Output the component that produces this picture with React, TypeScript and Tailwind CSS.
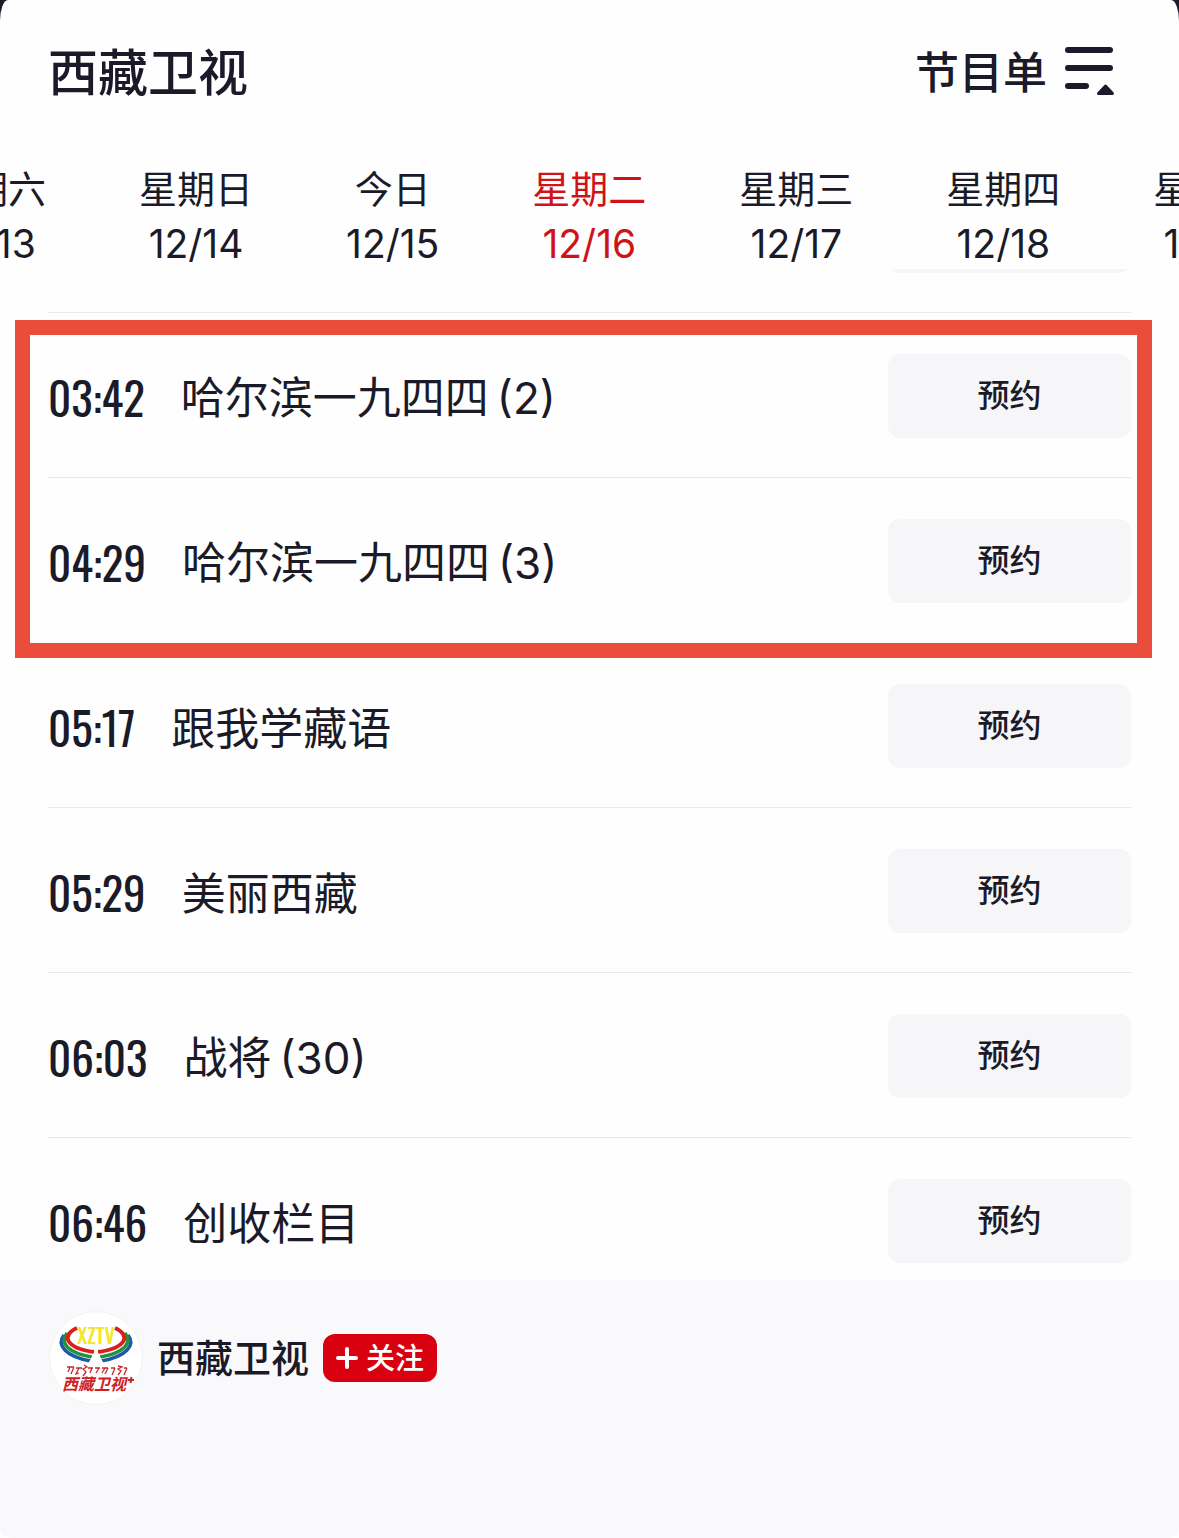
import React from 'react';

const days = [
  { label: '星期六', date: '12/13' },
  { label: '星期日', date: '12/14' },
  { label: '今日', date: '12/15' },
  { label: '星期二', date: '12/16', active: true },
  { label: '星期三', date: '12/17' },
  { label: '星期四', date: '12/18' },
  { label: '星期五', date: '12/19' },
];

type Programme = { time: string; name: string; part?: string };

const highlighted: Programme[] = [
  { time: '03:42', name: '哈尔滨一九四四', part: '(2)' },
  { time: '04:29', name: '哈尔滨一九四四', part: '(3)' },
];

const others: Programme[] = [
  { time: '05:17', name: '跟我学藏语' },
  { time: '05:29', name: '美丽西藏' },
  { time: '06:03', name: '战将', part: '(30)' },
  { time: '06:46', name: '创收栏目' },
];

function Row({ time, name, part }: Programme) {
  return (
    <li className="mx-12 flex h-[165px] items-center border-b border-[#e9e9eb] pt-0.5">
      <time className="font-['Oswald','Noto_Sans_CJK_SC',sans-serif] text-[45px] leading-none">
        {time}
      </time>
      <span className="ml-9 flex-1 font-['Noto_Sans_CJK_SC',sans-serif] text-[44px] leading-none">
        {name}
        {part && <span className="ml-2 font-['Inter',sans-serif]">{part}</span>}
      </span>
      <button
        type="button"
        className="h-[84px] w-[243px] rounded-xl bg-[#f6f6f9] text-[32px] font-medium leading-none"
      >
        预约
      </button>
    </li>
  );
}

function MenuIcon() {
  return (
    <svg width="50" height="54" viewBox="0 0 50 54" aria-hidden="true">
      <path
        d="M3 4H45M3 22H45M3 40H21"
        stroke="#1b1a28"
        strokeWidth="6"
        strokeLinecap="round"
      />
      <path
        d="M33.500 47.500L40.500 40L47.500 47.500Z"
        fill="#1b1a28"
        stroke="#1b1a28"
        strokeWidth="3"
        strokeLinejoin="round"
      />
    </svg>
  );
}

function ChannelLogo() {
  return (
    <svg width="96" height="94" viewBox="-1 0 96 94" role="img" aria-label="XZTV">
      <circle cx="47" cy="47" r="46.500" fill="#fff" stroke="#f2f2f5" />
      <g fill="none">
        <path d="M15 24C7 34 17 46 42 50" stroke="#1b5aa6" strokeWidth="3.500" />
        <path d="M18 22C10 32 19 42 43 46" stroke="#23933f" strokeWidth="3.500" />
        <path d="M28 17C12 24 16 37 45 41" stroke="#d9201f" strokeWidth="4" />
        <path d="M79 24C87 34 77 46 52 50" stroke="#1b5aa6" strokeWidth="3.500" />
        <path d="M76 22C84 32 75 42 51 46" stroke="#23933f" strokeWidth="3.500" />
        <path d="M66 17C82 24 78 37 49 41" stroke="#d9201f" strokeWidth="4" />
      </g>
      <path d="M47 38L39 53H55Z" fill="#fff" />
      <text
        x="47"
        y="33"
        textAnchor="middle"
        fontFamily="Oswald, sans-serif"
        fontWeight="500"
        fontSize="20"
        fill="#f5e62c"
      >
        XZTV
      </text>
      <path
        d="M18 56h7M21 56l-2 5M25 56l-3 7M27 57h6M30 57l-3 6 3-1M35 54l3 2-4 2 3 3-3 4M39 57h5M43 57l-2 5M46 57h5M50 57l-3 5M53 57h6M56 57l-3 5M59 57l-3 6M62 57h4M66 57l-3 7M69 55l4 1-4 2 3 2-3 4M75 57h3M78 57l-3 7"
        fill="none"
        stroke="#c62a28"
        strokeWidth="1.300"
      />
      <text
        x="45"
        y="79"
        textAnchor="middle"
        fontFamily="Noto Sans CJK SC, sans-serif"
        fontStyle="italic"
        fontWeight="700"
        fontSize="16"
        fill="#d0201f"
      >
        西藏卫视
      </text>
      <path d="M79 69h6M82.500 66l-1 6" stroke="#d0201f" strokeWidth="2" />
    </svg>
  );
}

export default function App() {
  return (
    <div className="h-screen bg-[#1b1a28] font-['Inter','Noto_Sans_CJK_SC',sans-serif] text-[#1b1a28]">
      <main className="flex h-full flex-col overflow-hidden rounded-tl-[8px_21px] rounded-tr-[8px_21px] bg-[#fefefe]">
        <header className="flex h-[146px] shrink-0 items-center justify-between pr-16 pl-12">
          <h1 className="text-[50px] font-medium leading-none">西藏卫视</h1>
          <button
            type="button"
            className="flex items-center gap-[18px] text-[44px] font-medium leading-none"
          >
            节目单
            <MenuIcon />
          </button>
        </header>

        <nav className="-ml-[68px] flex h-[123px] shrink-0 gap-[93px] pt-5" aria-label="日期">
          {days.map((d) => (
            <button
              key={d.date}
              type="button"
              aria-current={d.active ? 'date' : undefined}
              className={
                d.active
                  ? 'flex shrink-0 flex-col items-center text-[#cf1419]'
                  : 'flex shrink-0 flex-col items-center'
              }
            >
              <span className="text-[38px] leading-[46px]">{d.label}</span>
              <span className="text-[39px] leading-[64px]">{d.date}</span>
            </button>
          ))}
        </nav>

        <section className="flex min-h-0 flex-1 flex-col overflow-hidden">
          <div className="mx-12 flex h-11 shrink-0 items-end justify-end overflow-hidden border-b border-[#e9e9eb] pb-[39px]">
            <button
              type="button"
              aria-label="预约"
              className="h-[84px] w-[243px] shrink-0 rounded-xl bg-[#f6f6f9]"
            />
          </div>
          <div className="relative">
            <ul className="[&>li:last-child]:border-transparent">
              {highlighted.map((p) => (
                <Row key={p.time} {...p} />
              ))}
            </ul>
            <div className="pointer-events-none absolute top-[7px] right-[27px] -bottom-[15px] left-[15px] border-[15px] border-[#eb4d3d]" />
          </div>
          <ul>
            {others.map((p) => (
              <Row key={p.time} {...p} />
            ))}
          </ul>
        </section>

        <footer className="h-[258px] shrink-0 rounded-b-xl bg-[#f9f9fc] px-12 pt-[31px]">
          <div className="flex items-center">
            <ChannelLogo />
            <span className="ml-[13px] text-[38px] font-medium leading-none">西藏卫视</span>
            <button
              type="button"
              className="ml-3.5 flex h-12 w-[114px] items-center justify-center gap-2 rounded-xl bg-[#d9000f] text-[29px] font-medium leading-none text-white"
            >
              <svg width="22" height="22" viewBox="0 0 22 22" aria-hidden="true">
                <path d="M2 11H20M11 2V20" stroke="#fff" strokeWidth="4" strokeLinecap="round" />
              </svg>
              关注
            </button>
          </div>
        </footer>
      </main>
    </div>
  );
}
